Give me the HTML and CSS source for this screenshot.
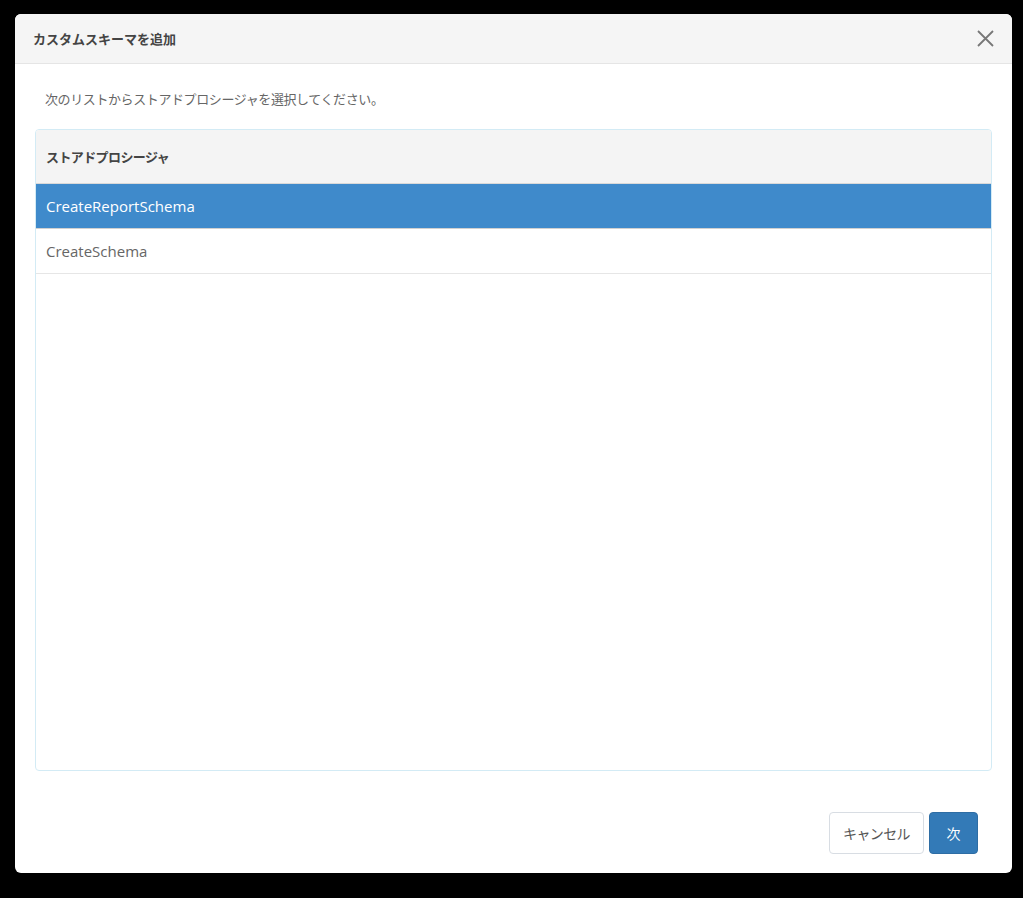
FILE: index.html
```html
<!DOCTYPE html>
<html lang="ja">
<head>
<meta charset="utf-8">
<title>カスタムスキーマを追加</title>
<link rel="stylesheet" href="styles.css">
</head>
<body>
<div class="dialog">
  <div class="dialog-header">
    <div class="dialog-title">カスタムスキーマを追加</div>
    <button class="close-btn" aria-label="閉じる">
      <svg width="17" height="17" viewBox="0 0 17 17"><path d="M1 1 L16 16 M16 1 L1 16" stroke="#777" stroke-width="1.8" fill="none"/></svg>
    </button>
  </div>
  <div class="dialog-body">
    <p class="intro">次のリストからストアドプロシージャを選択してください。</p>
    <div class="grid">
      <div class="grid-head">ストアドプロシージャ</div>
      <div class="grid-row selected">CreateReportSchema</div>
      <div class="grid-row">CreateSchema</div>
    </div>
  </div>
  <div class="dialog-footer">
    <button class="btn btn-default">キャンセル</button>
    <button class="btn btn-primary">次</button>
  </div>
</div>
</body>
</html>
```
FILE: styles.css
```css
html, body {
  margin: 0;
  padding: 0;
  background: #000;
  height: 100%;
}
body {
  font-family: "Open Sans", "Noto Sans CJK JP", sans-serif;
  font-size: 13px;
  color: #333;
  padding-top: 14px;
  padding-left: 15px;
  box-sizing: border-box;
}
.dialog {
  width: 997px;
  height: 859px;
  background: #fff;
  border-radius: 6px;
  display: flex;
  flex-direction: column;
  overflow: hidden;
}
.dialog-header {
  height: 49px;
  background: #f5f5f5;
  border-bottom: 1px solid #e5e5e5;
  display: flex;
  align-items: center;
  justify-content: space-between;
  padding: 0 18px 0 18px;
  flex-shrink: 0;
}
.dialog-title {
  font-family: "Noto Sans CJK JP", sans-serif;
  font-size: 13px;
  font-weight: 700;
  color: #444;
}
.close-btn {
  background: none;
  border: 0;
  padding: 0;
  width: 17px;
  height: 17px;
  display: flex;
  align-items: center;
  justify-content: center;
  cursor: pointer;
}
.dialog-body {
  padding: 0 20px;
  flex: 1;
  display: flex;
  flex-direction: column;
}
.intro {
  font-family: "Noto Sans CJK JP", sans-serif;
  font-size: 13px;
  letter-spacing: -0.4px;
  color: #666;
  margin: 0;
  padding: 25px 0 0 10px;
  height: 40px;
  line-height: 20px;
}
.grid {
  height: 640px;
  border: 1px solid #d3ebf5;
  border-radius: 4px;
  overflow: hidden;
}
.grid-head {
  height: 53px;
  background: #f4f4f4;
  border-bottom: 1px solid #d9d9d9;
  display: flex;
  align-items: center;
  padding-left: 10px;
  font-family: "Noto Sans CJK JP", sans-serif;
  font-size: 13px;
  letter-spacing: -0.6px;
  font-weight: 700;
  color: #444;
}
.grid-row {
  height: 44px;
  display: flex;
  align-items: center;
  padding-left: 10px;
  font-size: 15px;
  color: #666;
  border-bottom: 1px solid #e6e6e6;
}
.grid-row.selected {
  background: #3f8acb;
  color: #fff;
  border-bottom-color: #d0d0d0;
}
.dialog-footer {
  height: 102px;
  display: flex;
  justify-content: flex-end;
  align-items: flex-start;
  gap: 5px;
  padding: 41px 34px 0 0;
  box-sizing: border-box;
  flex-shrink: 0;
}
.btn {
  height: 42px;
  border-radius: 4px;
  font-family: "Noto Sans CJK JP", sans-serif;
  font-size: 14px;
  white-space: nowrap;
  padding: 0;
  cursor: pointer;
}
.btn-default {
  background: #fff;
  border: 1px solid #d8dde3;
  color: #555;
  width: 95px;
  letter-spacing: -0.6px;
}
.btn-primary {
  background: #337ab7;
  border: 1px solid #2e6da4;
  color: #fff;
  width: 49px;
}
```
